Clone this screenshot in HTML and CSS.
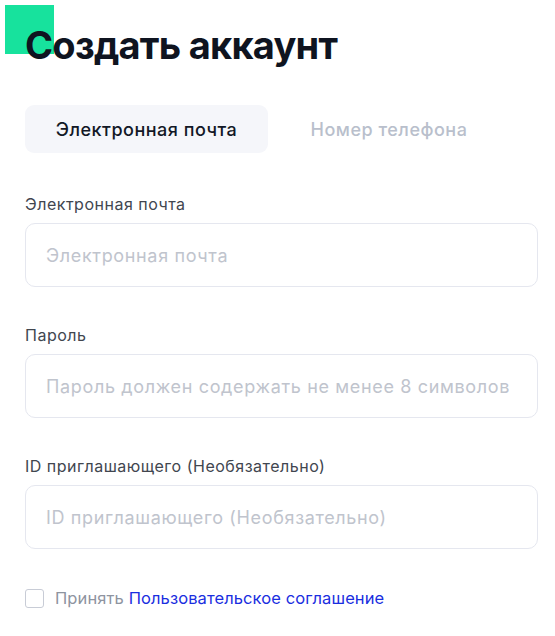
FILE: index.html
```html
<!DOCTYPE html>
<html lang="ru">
<head>
<meta charset="utf-8">
<link rel="stylesheet" href="styles.css">
</head>
<body>
<div class="badge"></div>
<main class="page">
  <h1 class="title">Создать аккаунт</h1>
  <div class="tabs">
    <div class="tab tab-active">Электронная почта</div>
    <div class="tab">Номер телефона</div>
  </div>
  <div class="field">
    <label class="label">Электронная почта</label>
    <div class="input"><span class="placeholder">Электронная почта</span></div>
  </div>
  <div class="field">
    <label class="label">Пароль</label>
    <div class="input"><span class="placeholder">Пароль должен содержать не менее 8 символов</span></div>
  </div>
  <div class="field">
    <label class="label">ID приглашающего (Необязательно)</label>
    <div class="input"><span class="placeholder">ID приглашающего (Необязательно)</span></div>
  </div>
  <div class="agree">
    <span class="checkbox"></span>
    <span class="agree-text">Принять <a class="link">Пользовательское соглашение</a></span>
  </div>
</main>
</body>
</html>
```

FILE: styles.css
```css
* { box-sizing: border-box; }
html, body { margin: 0; padding: 0; background: #fff; }
body { font-family: Inter, "Noto Sans", sans-serif; color: #121826; }
.badge {
  position: absolute;
  left: 5px; top: 5px;
  width: 49px; height: 49px;
  background: #17e29d;
}
.page {
  width: 513px;
  margin-left: 25px;
  padding-top: 19px;
}
.title {
  position: relative;
  margin: 0;
  font-size: 38px;
  font-weight: 700;
  line-height: 52px;
  letter-spacing: -0.75px;
  color: #0f1420;
}
.tabs {
  display: flex;
  margin-top: 34px;
  height: 48px;
}
.tab {
  width: 243px;
  display: flex;
  align-items: center;
  justify-content: center;
  font-size: 18px;
  font-weight: 500;
  letter-spacing: 0.5px;
  color: #b9bfcc;
  border-radius: 9px;
}
.tab + .tab { width: 242px; }
.tab-active {
  background: #f5f6fa;
  color: #121826;
}
.field { margin-top: 41px; }
.field + .field { margin-top: 38px; }
.label {
  display: block;
  font-size: 16px;
  line-height: 20px;
  letter-spacing: 0.5px;
  color: #41464f;
  margin-bottom: 9px;
}
.input {
  height: 64px;
  border: 1px solid #e5e7ef;
  border-radius: 10px;
  display: flex;
  align-items: center;
  padding-left: 20px;
}
.placeholder {
  font-size: 18px;
  letter-spacing: 0.65px;
  color: #c0c4cd;
  white-space: nowrap;
}
.agree {
  display: flex;
  align-items: center;
  margin-top: 39px;
  gap: 11px;
}
.checkbox {
  width: 19px; height: 19px;
  border: 1px solid #c8ccd6;
  border-radius: 3px;
}
.agree-text {
  font-size: 16.5px;
  letter-spacing: 0.1px;
  color: #8e94a0;
}
.link { color: #1a2ee0; text-decoration: none; }
```
